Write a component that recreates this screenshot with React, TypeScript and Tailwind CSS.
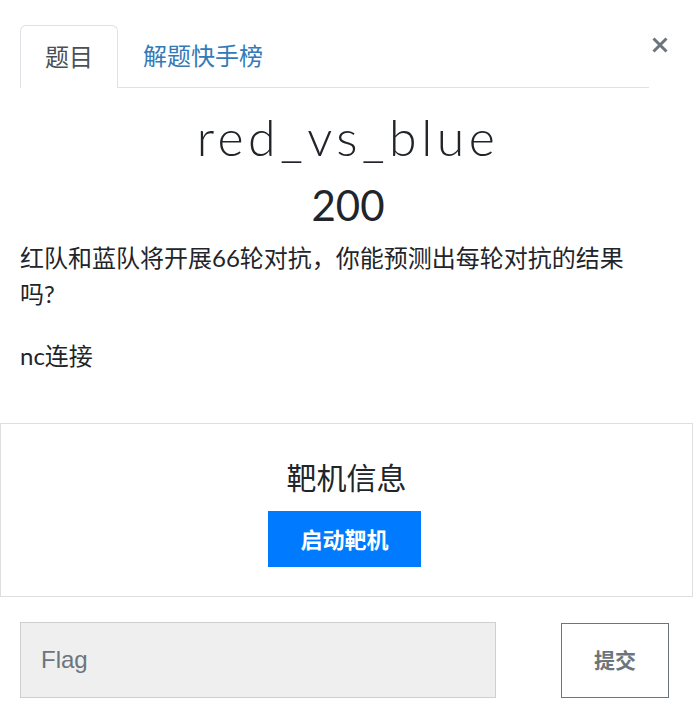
const cjk = "font-['Lato','Noto_Sans_CJK_SC',sans-serif]";

export default function App() {
  return (
    <div className={`relative h-[716px] w-[696px] overflow-hidden bg-white text-[#212529] ${cjk}`}>
      <button className="absolute left-[651px] top-[36px] text-[#6c757d]">
        <svg width="18" height="18" viewBox="0 0 18 18">
          <path d="M2.5 2.5L15.5 15.5M15.5 2.5L2.5 15.5" stroke="currentColor" strokeWidth="3" />
        </svg>
      </button>

      <div className="flex pl-[20px] pt-[25px]">
        <div className="flex h-[63px] w-[98px] items-center justify-center rounded-t-[6px] border border-b-0 border-[#dee2e6] text-[24px] text-[#495057]">
          题目
        </div>
        <div className="flex h-[63px] w-[531px] items-center border-b border-[#dee2e6] pl-[25px] text-[24px] text-[#337ab7]">
          解题快手榜
        </div>
      </div>

      <h3 className="mt-[22px] text-center font-['Lato',sans-serif] text-[50px] font-light leading-[54px] tracking-[4.5px]">
        red_vs_blue
      </h3>
      <h4 className="mt-[16px] text-center font-['Lato',sans-serif] text-[42px] leading-[50px]">
        200
      </h4>

      <div className="mt-[10px] px-[20px] text-[24px] leading-[36px]">
        <p className="w-[630px]">红队和蓝队将开展66轮对抗，你能预测出每轮对抗的结果吗?</p>
        <p className="mt-[26px]">nc连接</p>
      </div>

      <div className="mt-[49px] flex h-[174px] w-[693px] flex-col items-center border border-[#dedede]">
        <div className="mt-[33px] text-[30px] leading-[40px]">靶机信息</div>
        <button className="mr-[4px] mt-[14px] h-[56px] w-[153px] bg-[#007bff] text-[22px] font-bold text-white">
          启动靶机
        </button>
      </div>

      <div className="mt-[25px] flex items-center px-[20px]">
        <input
          placeholder="Flag"
          className="h-[76px] w-[476px] border border-[#cfcfcf] bg-[#efefef] px-[20px] font-['Liberation_Sans',sans-serif] text-[24px] text-[#495057] placeholder:text-[#6c757d] outline-none"
        />
        <button className="ml-auto mr-[7px] h-[75px] w-[108px] border border-[#6c757d] text-[21px] font-bold text-[#6c757d]">
          提交
        </button>
      </div>
    </div>
  );
}
